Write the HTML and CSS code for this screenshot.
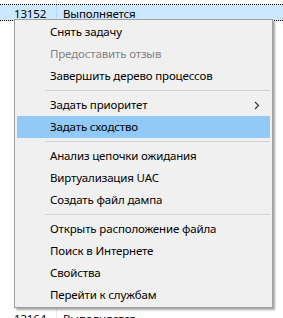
FILE: index.html
```html
<html>
  <head>
    <meta charset="utf-8">
    <link rel="stylesheet" href="styles.css">
  </head>
  <body>
    <div class="list">
      <div class="row top-row"><span class="pid"></span><span class="status"></span></div>
      <div class="row selected"><span class="pid">13152</span><span class="status">Выполняется</span></div>
      <div class="filler"><span class="pid"></span><span class="status"></span></div>
      <div class="row last"><span class="pid">13164</span><span class="status">Выполняется</span></div>
    </div>

    <div class="menu">
      <div class="item">Снять задачу</div>
      <div class="item disabled">Предоставить отзыв</div>
      <div class="item">Завершить дерево процессов</div>
      <div class="sep"></div>
      <div class="item">Задать приоритет
        <svg class="arrow" width="6" height="9" viewBox="0 0 6 9"><path d="M1 1 L4.5 4.5 L1 8" fill="none" stroke="#333" stroke-width="1.1"/></svg>
      </div>
      <div class="item active">Задать сходство</div>
      <div class="sep"></div>
      <div class="item">Анализ цепочки ожидания</div>
      <div class="item">Виртуализация UAC</div>
      <div class="item">Создать файл дампа</div>
      <div class="sep"></div>
      <div class="item">Открыть расположение файла</div>
      <div class="item">Поиск в Интернете</div>
      <div class="item">Свойства</div>
      <div class="item">Перейти к службам</div>
    </div>
  </body>
</html>
```

FILE: styles.css
```css
body {
  margin: 0;
  background: #fff;
  font-family: "Noto Sans", "Open Sans", sans-serif;
  font-size: 11.5px;
  letter-spacing: -0.15px;
  color: #000;
  overflow: hidden;
  height: 318px;
}
.list {
  height: 328px;
  display: flex;
  flex-direction: column;
}
.row, .filler {
  display: flex;
  height: 16px;
  line-height: 16px;
  flex-shrink: 0;
}
.top-row {
  height: 4px;
}
.selected {
  height: 17px;
  background: #cce8ff;
  border-top: 1px dotted #000;
  border-bottom: 1px dotted #000;
  box-sizing: border-box;
  line-height: 18px;
}
.last {
  height: 18px;
  line-height: 18px;
}
.filler {
  flex: 1;
}
.pid {
  width: 57px;
  padding-left: 14px;
  box-sizing: border-box;
  border-right: 1px solid #ececec;
}
.selected .pid {
  border-right-color: #b9d9f2;
}
.status {
  padding-left: 6px;
}
.menu {
  position: absolute;
  left: 14px;
  top: 19px;
  width: 259px;
  box-sizing: border-box;
  padding: 1px 2px;
  background: #f0f0f0;
  border: 1px solid #a0a0a0;
  box-shadow: 2px 2px 2px rgba(0, 0, 0, 0.35);
}
.item {
  position: relative;
  height: 22px;
  line-height: 22px;
  padding-left: 33px;
  white-space: nowrap;
}
.item.disabled {
  color: #838383;
}
.item.active {
  background: #91c9f7;
}
.arrow {
  position: absolute;
  right: 10px;
  top: 7px;
}
.sep {
  height: 1px;
  margin: 3px 0 3px 28px;
  background: #d4d4d4;
}
```
